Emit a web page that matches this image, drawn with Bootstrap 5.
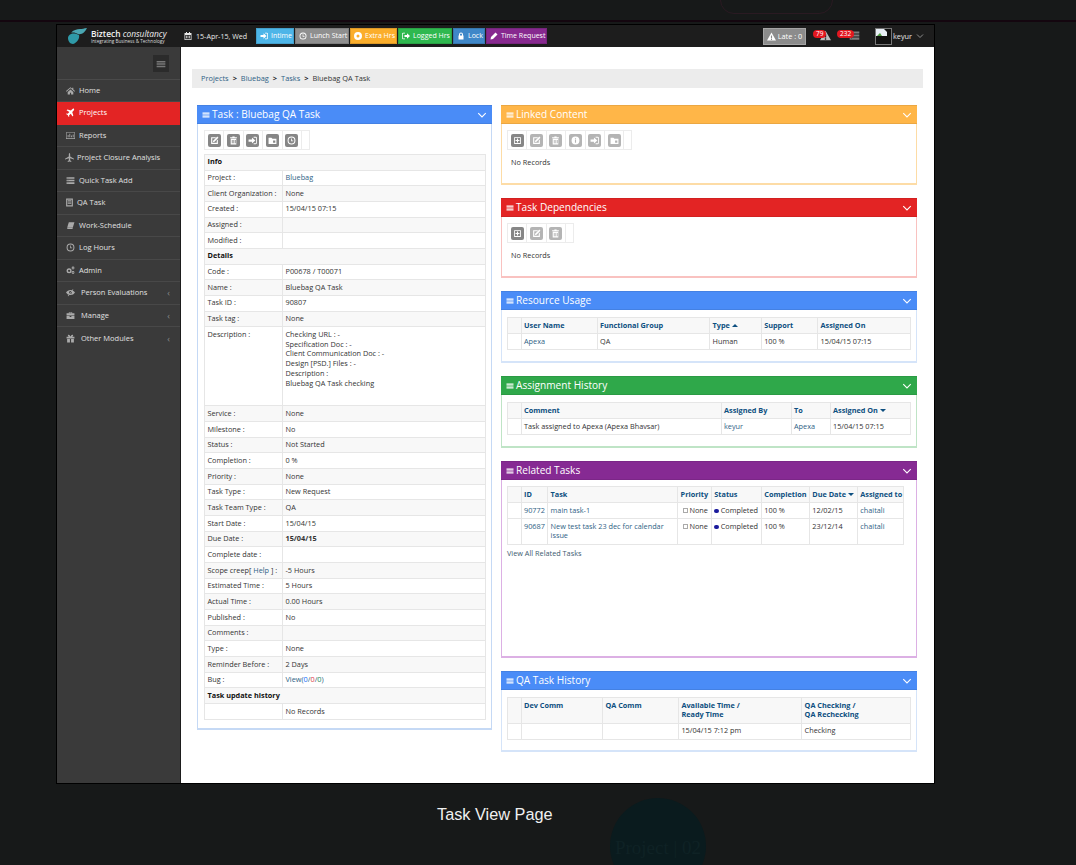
<!DOCTYPE html>
<html lang="en">
<head>
  <meta charset="UTF-8" />
  <meta name="viewport" content="width=device-width, initial-scale=1" />
  <title>Task View Page</title>
  <link href="https://cdn.jsdelivr.net/npm/bootstrap@5.3.0/dist/css/bootstrap.min.css" rel="stylesheet" />
  <style>
    html, body { height: 865px; overflow: hidden; }
    body { background: #171919; font-family: "Open Sans", sans-serif; font-size: 7.3px; color: #333; }
    a { color: #2f5f85; text-decoration: none; }
    svg { fill: currentColor; flex: none; }

    /* backdrop of the photographed page */
    .bg-strip { height: 22px; border-bottom: 2px solid #14060f; position: relative; }
    .bg-pill { position: absolute; left: 720px; top: -14px; width: 113px; height: 28px; border: 1px solid #2a1a22; border-radius: 14px; }

    .app-frame { width: 879px; height: 760px; margin: 2px 0 0 56px; border: 1px solid #000; background: #fff; }
    .top-bar { height: 22px; background: #1d1d1d; color: #e8e8e8; }
    .brand-box { width: 127px; padding-left: 10px; }
    .brand-name { font-size: 8.4px; font-weight: 600; line-height: 9px; color: #f2f2f2; white-space: nowrap; }
    .brand-name i { font-weight: 400; }
    .brand-tag { font-size: 4.6px; line-height: 6px; color: #ddd; white-space: nowrap; }
    .date-box { width: 72px; font-size: 7.1px; white-space: nowrap; }
    .top-btn { height: 16px; font-size: 7px; color: #fff; padding: 0 2px 0 3px; margin-right: 1px; border: 1px solid rgba(0,0,0,.12); white-space: nowrap; gap: 3px; }
    .tb-sky { background: #4db5e8; width: 38px; }
    .tb-grey { background: #8f8f8f; width: 54px; }
    .tb-orange { background: #fbae2c; width: 47px; }
    .tb-green { background: #2fb84f; width: 54px; }
    .tb-blue { background: #3f87c8; width: 32px; }
    .tb-purple { background: #87298f; width: 61px; }
    .late-box { width: 43px; height: 17px; background: #8c8c8c; border: 1px solid #a5a5a5; color: #fff; gap: 2px; white-space: nowrap; }
    .note-icon { position: relative; color: #bdbdbd; height: 14px; }
    .note-one { width: 18px; margin-left: 7px; }
    .note-two { width: 23px; margin: 0 15px 0 6px; color: #7d7d7d; }
    .note-icon svg { position: absolute; right: 0; bottom: 2px; }
    .note-count { position: absolute; z-index: 1; left: 0; top: 1px; background: #e3171f; color: #fff; font-size: 6.5px; line-height: 8px; border-radius: 5px; padding: 0 3px; }
    .user-pic { width: 17px; height: 17px; border: 1px solid #777; background: #111; margin-right: 1px; }
    .user-chev { margin: 0 10px 0 4px; color: #999; }

    .side-bar { width: 124px; background: #3a3a3a; border-right: 1px solid #1d1d1d; flex: none; }
    .side-top { height: 32.5px; padding: 8px 11px 0 0; border-bottom: 1px solid #4a4a4a; }
    .side-toggle { width: 16px; height: 17px; background: #2b2b2b; color: #777; }
    .side-item { height: 22.5px; padding-left: 9px; gap: 4px; color: #e0e0e0; font-size: 7.5px; border-bottom: 1px solid #484848; white-space: nowrap; }
    .side-item:last-child { border-bottom: 0; }
    .side-item svg { color: #aaa; }
    .side-item.is-active { background: #e32424; color: #fff; border-color: #e32424; }
    .side-item.is-active svg { color: #fff; }
    .side-tight { padding-left: 8px; gap: 3px; }
    .side-wide { gap: 6px; }
    .side-more { color: #8a8a8a; margin-left: auto; margin-right: 10px; font-size: 9px; }

    .main-pane { padding: 22px 11px 0; min-width: 0; }
    .crumb-bar { height: 19px; background: #ececec; padding-left: 9px; gap: 4px; color: #333; font-size: 7.4px; }
    .crumb-bar b { font-weight: 700; color: #222; }
    .panel-row { margin: 17px 5px 0; gap: 9px; align-items: flex-start; }
    .panel-left { width: 295px; flex: none; padding-left: 6px !important; }
    .panel-right { width: 416px; flex: none; gap: 13px; }

    .task-panel { border: 1px solid #c5d9f5; border-width: 0 1px 2px; padding: 0 5px; }
    .task-head { height: 19px; margin: 0 -6px; padding: 0 5px; color: #fff; font-size: 10.1px; gap: 2px; white-space: nowrap; border-top: 1px solid rgba(0,0,0,.08); border-bottom: 1px solid rgba(0,0,0,.08); }
    .panel-left .task-head { margin-left: -7px; }
    .task-head .head-chevron { margin-left: auto; }
    .head-blue { background: #4a8cf7; }
    .head-orange { background: #ffb648; }
    .head-red { background: #e32424; }
    .head-green { background: #2fa84a; }
    .head-purple { background: #862a93; }
    .line-orange { border-color: #fddca6; }
    .line-red { border-color: #f9c2c0; }
    .line-green { border-color: #bfe4c6; }
    .line-purple { border-color: #dcb0e4; }
    .line-sky { border-color: #d5e4f9; }

    .tool-strip { height: 20px; margin-top: 6px; border: 1px solid #ececec; width: fit-content; }
    .tool-cell { width: 19.4px; border-right: 1px solid #ececec; display: flex; align-items: center; justify-content: center; }
    .tool-cell:last-child { width: 7px; border-right: 0; }
    .tool-btn { width: 13px; height: 13px; background: #868686; color: #fff; border-radius: 2px; display: flex; align-items: center; justify-content: center; }
    .tool-btn.is-off { background: #b4b4b4; }
    .no-recs { padding: 7px 4px 0; line-height: 11px; }

    .data-table { margin: 0; font-size: 7.3px; color: #333; --bs-border-color: #e6e6e6; table-layout: fixed; width: 100%; }
    .data-table > :not(caption) > * > * { padding: 2.6px 2.5px; line-height: 9.8px; color: inherit; vertical-align: top; }
    .data-table thead th { background: #f8f8f8; color: #0d4f80; font-weight: 700; white-space: nowrap; }
    .data-table th { font-weight: 700; color: #111; }
    .info-table { margin-top: 4px; }
    .info-table > :not(caption) > * > * { padding: 2.45px 2.5px; }
    .info-table tbody > tr:nth-of-type(odd) > * { background: #f8f8f8; }
    .info-first { width: 78px; }
    .desc-cell { height: 79px; }
    .sort-up, .sort-down { display: inline-block; width: 0; height: 0; border: 3px solid transparent; vertical-align: middle; }
    .sort-up { border-bottom-color: #0d4f80; border-top-width: 0; }
    .sort-down { border-top-color: #0d4f80; border-bottom-width: 0; }
    .state-dot { display: inline-block; width: 4.5px; height: 4.5px; border-radius: 50%; background: #1a1a9c; vertical-align: -0.5px; }
    .prio-box { display: inline-block; width: 5px; height: 5px; margin-left: 2px; border: 1px solid #aaa; vertical-align: -0.5px; }

    .usage-table { margin-top: 7px; }
    .related-table { width: 397px; margin-top: 6px; }
    .c-w13 { width: 13.5px; }
    .c-w76 { width: 76px; } .c-w113 { width: 112.6px; } .c-w52 { width: 51.6px; } .c-w56 { width: 56.4px; }
    .c-w200 { width: 200px; } .c-w70 { width: 70px; } .c-w39 { width: 39px; }
    .c-w27 { width: 26.6px; } .c-w130 { width: 130px; } .c-w34 { width: 33.7px; } .c-w50 { width: 50px; } .c-w48 { width: 48px; }
    .c-w81 { width: 81.4px; } .c-w123 { width: 123.2px; }
    .panel-h72 { height: 72px; }
    .panel-h80 { height: 80px; }
    .panel-h197 { height: 197px; }
    .panel-h81 { height: 81px; }
    .view-all { display: block; margin-top: 3px; line-height: 10px; color: #3d5a70; }

    .shot-foot { position: relative; height: 81px; overflow: hidden; }
    .shot-caption { padding: 20px 0 0 437px; font-family: "Liberation Sans", sans-serif; font-size: 16.3px; line-height: 20px; color: #f0f0f0; }
    .ghost-disc { position: absolute; left: 610px; top: 14px; width: 96px; height: 96px; border-radius: 50%; background: #0a1b1e; color: #0f2225; font-family: "Liberation Serif", serif; font-size: 19px; text-align: center; padding-top: 36px; white-space: nowrap; }
  </style>
</head>
<body>

<svg width="0" height="0" class="position-absolute">
  <symbol id="i-bars" viewBox="0 0 16 16"><path d="M1 3h14v2.400H1zM1 6.800h14v2.400H1zM1 10.600h14V13H1z"/></symbol>
  <symbol id="i-chev" viewBox="0 0 16 16"><path d="M2 5l6 6 6-6" fill="none" stroke="currentColor" stroke-width="1.8"/></symbol>
  <symbol id="i-home" viewBox="0 0 16 16"><path d="M8 2L0 9l1 1 7-6 7 6 1-1-3-2.600V3h-2v1.800zM3 10.500V15h4v-3h2v3h4v-4.500L8 6z"/></symbol>
  <symbol id="i-plane" viewBox="0 0 16 16"><path d="M14.500 1.500c-1-1-2.500-.3-3.500.7L8.800 4.400 2.500 2.500 1 4l5 3-3 3-2-.4-1 1 3 1.900L4.900 16l1-1-.4-2 3-3 3 5 1.500-1.500-1.900-6.300 2.200-2.200c1-1 1.700-2.500.7-3.500z"/></symbol>
  <symbol id="i-jet" viewBox="0 0 16 16"><path d="M8 0c.8 0 1.200 1.500 1.200 3v3L16 10v1.500L9.200 9.500V13l2 1.500V16L8 15l-3.200 1v-1.500l2-1.500V9.500L0 11.500V10l6.800-4V3C6.800 1.500 7.200 0 8 0z"/></symbol>
  <symbol id="i-chart" viewBox="0 0 16 16"><path d="M0 2h16v12H0zm1 1v10h14V3zm2 8h1.500V7H3zm3 0h1.500V5H6zm3 0h1.500V8H9zm3 0h1.500V6H12z" fill-rule="evenodd"/></symbol>
  <symbol id="i-list" viewBox="0 0 16 16"><path d="M1 2h14v3H1zM1 6.500h14v3H1zM1 11h14v3H1z"/><path d="M3 3h1v1H3zM3 7.500h1v1H3zM3 12h1v1H3z" fill="#3a3a3a"/></symbol>
  <symbol id="i-doc" viewBox="0 0 16 16"><path d="M2 1h12v14H2zm2 2v10h8V3zm1 1h6v2H5zm0 3h6v1H5zm0 2h6v1H5z" fill-rule="evenodd"/></symbol>
  <symbol id="i-book" viewBox="0 0 16 16"><path d="M5 2h10l-3 10H2zM2 12.500h10l-.5 1.500H2.500z"/></symbol>
  <symbol id="i-clock" viewBox="0 0 16 16"><path d="M8 1a7 7 0 100 14A7 7 0 008 1zm0 1.800a5.200 5.200 0 110 10.400A5.200 5.200 0 018 2.800zM7.300 4.500h1.400V8H11v1.400H7.300z" fill-rule="evenodd"/></symbol>
  <symbol id="i-gears" viewBox="0 0 16 16"><path d="M5.500 4a4.500 4.500 0 100 9 4.500 4.500 0 000-9zm0 2.500a2 2 0 110 4 2 2 0 010-4zM12.500 1a2.500 2.500 0 100 5 2.500 2.500 0 000-5zm0 1.500a1 1 0 110 2 1 1 0 010-2zM12.500 9a2.500 2.500 0 100 5 2.500 2.500 0 000-5zm0 1.500a1 1 0 110 2 1 1 0 010-2z" fill-rule="evenodd"/></symbol>
  <symbol id="i-eye" viewBox="0 0 16 16"><path d="M0 8c2-3 4.500-4.500 8-4.500S14 5 16 8c-2 3-4.500 4.500-8 4.500S2 11 0 8zm8-2.500a2.500 2.500 0 100 5 2.500 2.500 0 000-5z" fill-rule="evenodd"/><path d="M3 14L12 2l1.200.8-9 12z"/></symbol>
  <symbol id="i-case" viewBox="0 0 16 16"><path d="M5 2h6v2h4v4H1V4h4zm1.300 1.200V4h3.400v-.8zM1 9h5.500v1.500h3V9H15v5H1z" fill-rule="evenodd"/></symbol>
  <symbol id="i-gift" viewBox="0 0 16 16"><path d="M1 5h14v3H1zM2 9h5v6H2zM9 9h5v6H9zM4 1.500C5.500.5 7 2.500 8 4.500c1-2 2.500-4 4-3 1.500 1 .5 3-1 3.500H5c-1.500-.5-2.500-2.500-1-3.500z"/></symbol>
  <symbol id="i-cal" viewBox="0 0 16 16"><path d="M4 0h2v2h4V0h2v2h3v14H1V2h3zM2.500 6v8.500h11V6zM4 7.500h2v2H4zM7 7.500h2v2H7zM10 7.500h2v2h-2zM4 10.700h2v2H4zM7 10.700h2v2H7zM10 10.700h2v2h-2z" fill-rule="evenodd"/></symbol>
  <symbol id="i-in" viewBox="0 0 16 16"><path d="M1 6h6V2.500L13 8l-6 5.500V10H1zM10 1.500h3.500A2.500 2.500 0 0116 4v8a2.500 2.500 0 01-2.500 2.500H10V13h3.500a1 1 0 001-1V4a1 1 0 00-1-1H10z"/></symbol>
  <symbol id="i-out" viewBox="0 0 16 16"><path d="M6 1.500H2.500A2.500 2.500 0 000 4v8a2.500 2.500 0 002.500 2.500H6V13H2.500a1 1 0 01-1-1V4a1 1 0 011-1H6zM5 6h5V2.500L16 8l-6 5.500V10H5z"/></symbol>
  <symbol id="i-stop" viewBox="0 0 16 16"><path d="M8 0a8 8 0 100 16A8 8 0 008 0zm0 5a3 3 0 110 6 3 3 0 010-6z" fill-rule="evenodd"/></symbol>
  <symbol id="i-lock" viewBox="0 0 16 16"><path d="M8 1a4 4 0 00-4 4v2H3v8h10V7h-1V5a4 4 0 00-4-4zm0 2a2 2 0 012 2v2H6V5a2 2 0 012-2z" fill-rule="evenodd"/></symbol>
  <symbol id="i-pen" viewBox="0 0 16 16"><path d="M11 1l4 4-9 9-5 1 1-5z"/></symbol>
  <symbol id="i-warn" viewBox="0 0 16 16"><path d="M8 1l8 14H0zM7 6v5h2V6zm0 6v2h2v-2z" fill-rule="evenodd"/></symbol>
  <symbol id="i-edit" viewBox="0 0 16 16"><path d="M2 2h9l-2 2H4v8h8V8l2-2v8H2z"/><path d="M13 1l2 2-7 7-3 1 1-3z"/></symbol>
  <symbol id="i-trash" viewBox="0 0 16 16"><path d="M6 1h4v1h4v2H2V2h4zM3 5h10v10H3zm2 2v6h1.500V7zm2.800 0v6h1.500V7zm2.700 0v6H12V7z" fill-rule="evenodd"/></symbol>
  <symbol id="i-folder" viewBox="0 0 16 16"><path d="M1 3h5l2 2h7v9H1zM9 8v4h4V8z" fill-rule="evenodd"/></symbol>
  <symbol id="i-plus" viewBox="0 0 16 16"><path d="M2 2h12v12H2zm1.500 1.500v9h9v-9zM7 4.500h2V7h2.500v2H9v2.500H7V9H4.500V7H7z" fill-rule="evenodd"/></symbol>
  <symbol id="i-info" viewBox="0 0 16 16"><path d="M8 1a7 7 0 100 14A7 7 0 008 1zM7 4h2v2H7zm0 3h2v5H7z" fill-rule="evenodd"/></symbol>
</svg>

<div class="bg-strip"><span class="bg-pill"></span></div>

<div class="app-frame d-flex flex-column">
  <!-- top bar -->
  <div class="top-bar d-flex align-items-center flex-shrink-0">
    <div class="brand-box d-flex align-items-center gap-1">
      <svg width="20" height="17" viewBox="0 0 20 17"><path d="M1 10c0-2 1-3 3-4 3-1 6 0 8 1 1 3-2 8-6 9-3 0-5-3-5-6z" fill="#2f9aa8"/><path d="M4 5c2-3 6-4 9-4 2 0 4-.5 7-1-2 4-5 7-9 6-2-1-5-2-7-1z" fill="#4aa6b2"/></svg>
      <div>
        <div class="brand-name">Biztech <i>consultancy</i></div>
        <div class="brand-tag">Integrating Business &amp; Technology</div>
      </div>
    </div>
    <div class="date-box d-flex align-items-center gap-1"><svg width="8" height="8"><use href="#i-cal"/></svg>15-Apr-15, Wed</div>
    <div class="top-btn tb-sky d-flex align-items-center"><svg width="8" height="8"><use href="#i-in"/></svg>Intime</div>
    <div class="top-btn tb-grey d-flex align-items-center"><svg width="8" height="8"><use href="#i-clock"/></svg>Lunch Start</div>
    <div class="top-btn tb-orange d-flex align-items-center"><svg width="8" height="8"><use href="#i-stop"/></svg>Extra Hrs</div>
    <div class="top-btn tb-green d-flex align-items-center"><svg width="8" height="8"><use href="#i-out"/></svg>Logged Hrs</div>
    <div class="top-btn tb-blue d-flex align-items-center"><svg width="8" height="8"><use href="#i-lock"/></svg>Lock</div>
    <div class="top-btn tb-purple d-flex align-items-center"><svg width="8" height="8"><use href="#i-pen"/></svg>Time Request</div>
    <div class="ms-auto d-flex align-items-center">
      <div class="late-box d-flex align-items-center justify-content-center"><svg width="9" height="9"><use href="#i-warn"/></svg>Late : 0</div>
      <div class="note-icon note-one"><span class="note-count">79</span><svg width="11" height="11"><use href="#i-warn"/></svg></div>
      <div class="note-icon note-two"><span class="note-count">232</span><svg width="11" height="11"><use href="#i-list"/></svg></div>
      <div class="user-pic d-flex">
        <svg width="11" height="11" viewBox="0 0 11 11"><path d="M0 0h8l3 3v4H0z" fill="#e8eef5"/><path d="M1 7l3-3 2 3z" fill="#4c9a3f"/></svg>
      </div>
      <span>keyur</span>
      <svg width="8" height="8" class="user-chev"><use href="#i-chev"/></svg>
    </div>
  </div>

  <div class="d-flex flex-grow-1 overflow-hidden">
    <!-- sidebar -->
    <nav class="side-bar">
      <div class="side-top d-flex justify-content-end align-items-start">
        <div class="side-toggle d-flex align-items-center justify-content-center"><svg width="10" height="12"><use href="#i-bars"/></svg></div>
      </div>
      <div class="side-item d-flex align-items-center"><svg width="9" height="9"><use href="#i-home"/></svg>Home</div>
      <div class="side-item is-active d-flex align-items-center"><svg width="9" height="9"><use href="#i-plane"/></svg>Projects</div>
      <div class="side-item d-flex align-items-center"><svg width="9" height="9"><use href="#i-chart"/></svg>Reports</div>
      <div class="side-item side-tight d-flex align-items-center"><svg width="9" height="9"><use href="#i-jet"/></svg>Project Closure Analysis</div>
      <div class="side-item d-flex align-items-center"><svg width="9" height="9"><use href="#i-list"/></svg>Quick Task Add</div>
      <div class="side-item side-tight d-flex align-items-center"><svg width="9" height="9"><use href="#i-doc"/></svg>QA Task</div>
      <div class="side-item d-flex align-items-center"><svg width="9" height="9"><use href="#i-book"/></svg>Work-Schedule</div>
      <div class="side-item d-flex align-items-center"><svg width="9" height="9"><use href="#i-clock"/></svg>Log Hours</div>
      <div class="side-item d-flex align-items-center"><svg width="9" height="9"><use href="#i-gears"/></svg>Admin</div>
      <div class="side-item side-wide d-flex align-items-center"><svg width="9" height="9"><use href="#i-eye"/></svg>Person Evaluations<span class="side-more">‹</span></div>
      <div class="side-item side-wide d-flex align-items-center"><svg width="9" height="9"><use href="#i-case"/></svg>Manage<span class="side-more">‹</span></div>
      <div class="side-item side-wide d-flex align-items-center"><svg width="9" height="9"><use href="#i-gift"/></svg>Other Modules<span class="side-more">‹</span></div>
    </nav>

    <!-- main -->
    <main class="main-pane flex-grow-1">
      <div class="crumb-bar d-flex align-items-center">
        <a href="#">Projects</a><b>&gt;</b><a href="#">Bluebag</a><b>&gt;</b><a href="#">Tasks</a><b>&gt;</b><span>Bluebag QA Task</span>
      </div>

      <div class="panel-row d-flex">
        <!-- left panel -->
        <section class="panel-left task-panel">
          <div class="task-head head-blue d-flex align-items-center"><svg width="8" height="8"><use href="#i-bars"/></svg>Task : Bluebag QA Task<svg class="head-chevron" width="10" height="10"><use href="#i-chev"/></svg></div>
          <div class="tool-strip d-flex">
            <div class="tool-cell"><span class="tool-btn"><svg width="9" height="9"><use href="#i-edit"/></svg></span></div>
            <div class="tool-cell"><span class="tool-btn"><svg width="9" height="9"><use href="#i-trash"/></svg></span></div>
            <div class="tool-cell"><span class="tool-btn"><svg width="9" height="9"><use href="#i-in"/></svg></span></div>
            <div class="tool-cell"><span class="tool-btn"><svg width="9" height="9"><use href="#i-folder"/></svg></span></div>
            <div class="tool-cell"><span class="tool-btn"><svg width="9" height="9"><use href="#i-clock"/></svg></span></div>
            <div class="tool-cell"></div>
          </div>
          <table class="table table-bordered data-table info-table mb-2">
            <colgroup><col class="info-first" /><col /></colgroup>
            <tbody>
              <tr><th colspan="2">Info</th></tr>
              <tr><td>Project :</td><td><a href="#">Bluebag</a></td></tr>
              <tr><td>Client Organization :</td><td>None</td></tr>
              <tr><td>Created :</td><td>15/04/15 07:15</td></tr>
              <tr><td>Assigned :</td><td></td></tr>
              <tr><td>Modified :</td><td></td></tr>
              <tr><th colspan="2">Details</th></tr>
              <tr><td>Code :</td><td>P00678 / T00071</td></tr>
              <tr><td>Name :</td><td>Bluebag QA Task</td></tr>
              <tr><td>Task ID :</td><td>90807</td></tr>
              <tr><td>Task tag :</td><td>None</td></tr>
              <tr><td class="desc-cell">Description :</td><td class="desc-cell">Checking URL : -<br />Specification Doc : -<br />Client Communication Doc : -<br />Design [PSD.] Files : -<br />Description :<br />Bluebag QA Task checking</td></tr>
              <tr><td>Service :</td><td>None</td></tr>
              <tr><td>Milestone :</td><td>No</td></tr>
              <tr><td>Status :</td><td>Not Started</td></tr>
              <tr><td>Completion :</td><td>0 %</td></tr>
              <tr><td>Priority :</td><td>None</td></tr>
              <tr><td>Task Type :</td><td>New Request</td></tr>
              <tr><td>Task Team Type :</td><td>QA</td></tr>
              <tr><td>Start Date :</td><td>15/04/15</td></tr>
              <tr><td>Due Date :</td><td><b>15/04/15</b></td></tr>
              <tr><td>Complete date :</td><td></td></tr>
              <tr><td>Scope creep[ <a href="#">Help</a> ] :</td><td>-5 Hours</td></tr>
              <tr><td>Estimated Time :</td><td>5 Hours</td></tr>
              <tr><td>Actual Time :</td><td>0.00 Hours</td></tr>
              <tr><td>Published :</td><td>No</td></tr>
              <tr><td>Comments :</td><td></td></tr>
              <tr><td>Type :</td><td>None</td></tr>
              <tr><td>Reminder Before :</td><td>2 Days</td></tr>
              <tr><td>Bug :</td><td><a href="#">View(<span class="text-primary">0</span>/<span class="text-danger">0</span>/<span class="text-success">0</span>)</a></td></tr>
              <tr><th colspan="2">Task update history</th></tr>
              <tr><td></td><td>No Records</td></tr>
            </tbody>
          </table>
        </section>

        <!-- right column -->
        <div class="panel-right d-flex flex-column">
          <section class="task-panel line-orange panel-h80">
            <div class="task-head head-orange d-flex align-items-center"><svg width="8" height="8"><use href="#i-bars"/></svg>Linked Content<svg class="head-chevron" width="10" height="10"><use href="#i-chev"/></svg></div>
            <div class="tool-strip d-flex">
              <div class="tool-cell"><span class="tool-btn"><svg width="9" height="9"><use href="#i-plus"/></svg></span></div>
              <div class="tool-cell"><span class="tool-btn is-off"><svg width="9" height="9"><use href="#i-edit"/></svg></span></div>
              <div class="tool-cell"><span class="tool-btn is-off"><svg width="9" height="9"><use href="#i-trash"/></svg></span></div>
              <div class="tool-cell"><span class="tool-btn is-off"><svg width="9" height="9"><use href="#i-info"/></svg></span></div>
              <div class="tool-cell"><span class="tool-btn is-off"><svg width="9" height="9"><use href="#i-in"/></svg></span></div>
              <div class="tool-cell"><span class="tool-btn is-off"><svg width="9" height="9"><use href="#i-folder"/></svg></span></div>
              <div class="tool-cell"></div>
            </div>
            <div class="no-recs">No Records</div>
          </section>

          <section class="task-panel line-red panel-h80">
            <div class="task-head head-red d-flex align-items-center"><svg width="8" height="8"><use href="#i-bars"/></svg>Task Dependencies<svg class="head-chevron" width="10" height="10"><use href="#i-chev"/></svg></div>
            <div class="tool-strip d-flex">
              <div class="tool-cell"><span class="tool-btn"><svg width="9" height="9"><use href="#i-plus"/></svg></span></div>
              <div class="tool-cell"><span class="tool-btn is-off"><svg width="9" height="9"><use href="#i-edit"/></svg></span></div>
              <div class="tool-cell"><span class="tool-btn is-off"><svg width="9" height="9"><use href="#i-trash"/></svg></span></div>
              <div class="tool-cell"></div>
            </div>
            <div class="no-recs">No Records</div>
          </section>

          <section class="task-panel line-sky panel-h72">
            <div class="task-head head-blue d-flex align-items-center"><svg width="8" height="8"><use href="#i-bars"/></svg>Resource Usage<svg class="head-chevron" width="10" height="10"><use href="#i-chev"/></svg></div>
            <table class="table table-bordered data-table usage-table">
              <colgroup><col class="c-w13" /><col class="c-w76" /><col class="c-w113" /><col class="c-w52" /><col class="c-w56" /><col /></colgroup>
              <thead><tr><th></th><th>User Name</th><th>Functional Group</th><th>Type <span class="sort-up"></span></th><th>Support</th><th>Assigned On</th></tr></thead>
              <tbody><tr><td></td><td><a href="#">Apexa</a></td><td>QA</td><td>Human</td><td>100 %</td><td>15/04/15 07:15</td></tr></tbody>
            </table>
          </section>

          <section class="task-panel line-green panel-h72">
            <div class="task-head head-green d-flex align-items-center"><svg width="8" height="8"><use href="#i-bars"/></svg>Assignment History<svg class="head-chevron" width="10" height="10"><use href="#i-chev"/></svg></div>
            <table class="table table-bordered data-table usage-table">
              <colgroup><col class="c-w13" /><col class="c-w200" /><col class="c-w70" /><col class="c-w39" /><col /></colgroup>
              <thead><tr><th></th><th>Comment</th><th>Assigned By</th><th>To</th><th>Assigned On <span class="sort-down"></span></th></tr></thead>
              <tbody><tr><td></td><td>Task assigned to Apexa (Apexa Bhavsar)</td><td><a href="#">keyur</a></td><td><a href="#">Apexa</a></td><td>15/04/15 07:15</td></tr></tbody>
            </table>
          </section>

          <section class="task-panel line-purple panel-h197">
            <div class="task-head head-purple d-flex align-items-center"><svg width="8" height="8"><use href="#i-bars"/></svg>Related Tasks<svg class="head-chevron" width="10" height="10"><use href="#i-chev"/></svg></div>
            <table class="table table-bordered data-table related-table">
              <colgroup><col class="c-w13" /><col class="c-w27" /><col class="c-w130" /><col class="c-w34" /><col class="c-w50" /><col class="c-w48" /><col class="c-w48" /><col /></colgroup>
              <thead><tr><th></th><th>ID</th><th>Task</th><th>Priority</th><th>Status</th><th>Completion</th><th>Due Date <span class="sort-down"></span></th><th>Assigned to</th></tr></thead>
              <tbody>
                <tr><td></td><td><a href="#">90772</a></td><td><a href="#">main task-1</a></td><td class="text-nowrap"><span class="prio-box"></span> None</td><td class="text-nowrap"><span class="state-dot"></span> Completed</td><td>100 %</td><td>12/02/15</td><td><a href="#">chaitali</a></td></tr>
                <tr><td></td><td><a href="#">90687</a></td><td><a href="#">New test task 23 dec for calendar issue</a></td><td class="text-nowrap"><span class="prio-box"></span> None</td><td class="text-nowrap"><span class="state-dot"></span> Completed</td><td>100 %</td><td>23/12/14</td><td><a href="#">chaitali</a></td></tr>
              </tbody>
            </table>
            <a class="view-all" href="#">View All Related Tasks</a>
          </section>

          <section class="task-panel line-sky panel-h81">
            <div class="task-head head-blue d-flex align-items-center"><svg width="8" height="8"><use href="#i-bars"/></svg>QA Task History<svg class="head-chevron" width="10" height="10"><use href="#i-chev"/></svg></div>
            <table class="table table-bordered data-table usage-table">
              <colgroup><col class="c-w13" /><col class="c-w81" /><col class="c-w76" /><col class="c-w123" /><col /></colgroup>
              <thead><tr><th></th><th>Dev Comm</th><th>QA Comm</th><th>Available Time /<br />Ready Time</th><th>QA Checking /<br />QA Rechecking</th></tr></thead>
              <tbody><tr><td></td><td></td><td></td><td>15/04/15 7:12 pm</td><td>Checking</td></tr></tbody>
            </table>
          </section>
        </div>
      </div>
    </main>
  </div>
</div>

<div class="shot-foot">
  <div class="ghost-disc">Project | 02</div>
  <div class="shot-caption position-relative">Task View Page</div>
</div>

<script src="https://cdn.jsdelivr.net/npm/bootstrap@5.3.0/dist/js/bootstrap.bundle.min.js"></script>
</body>
</html>
